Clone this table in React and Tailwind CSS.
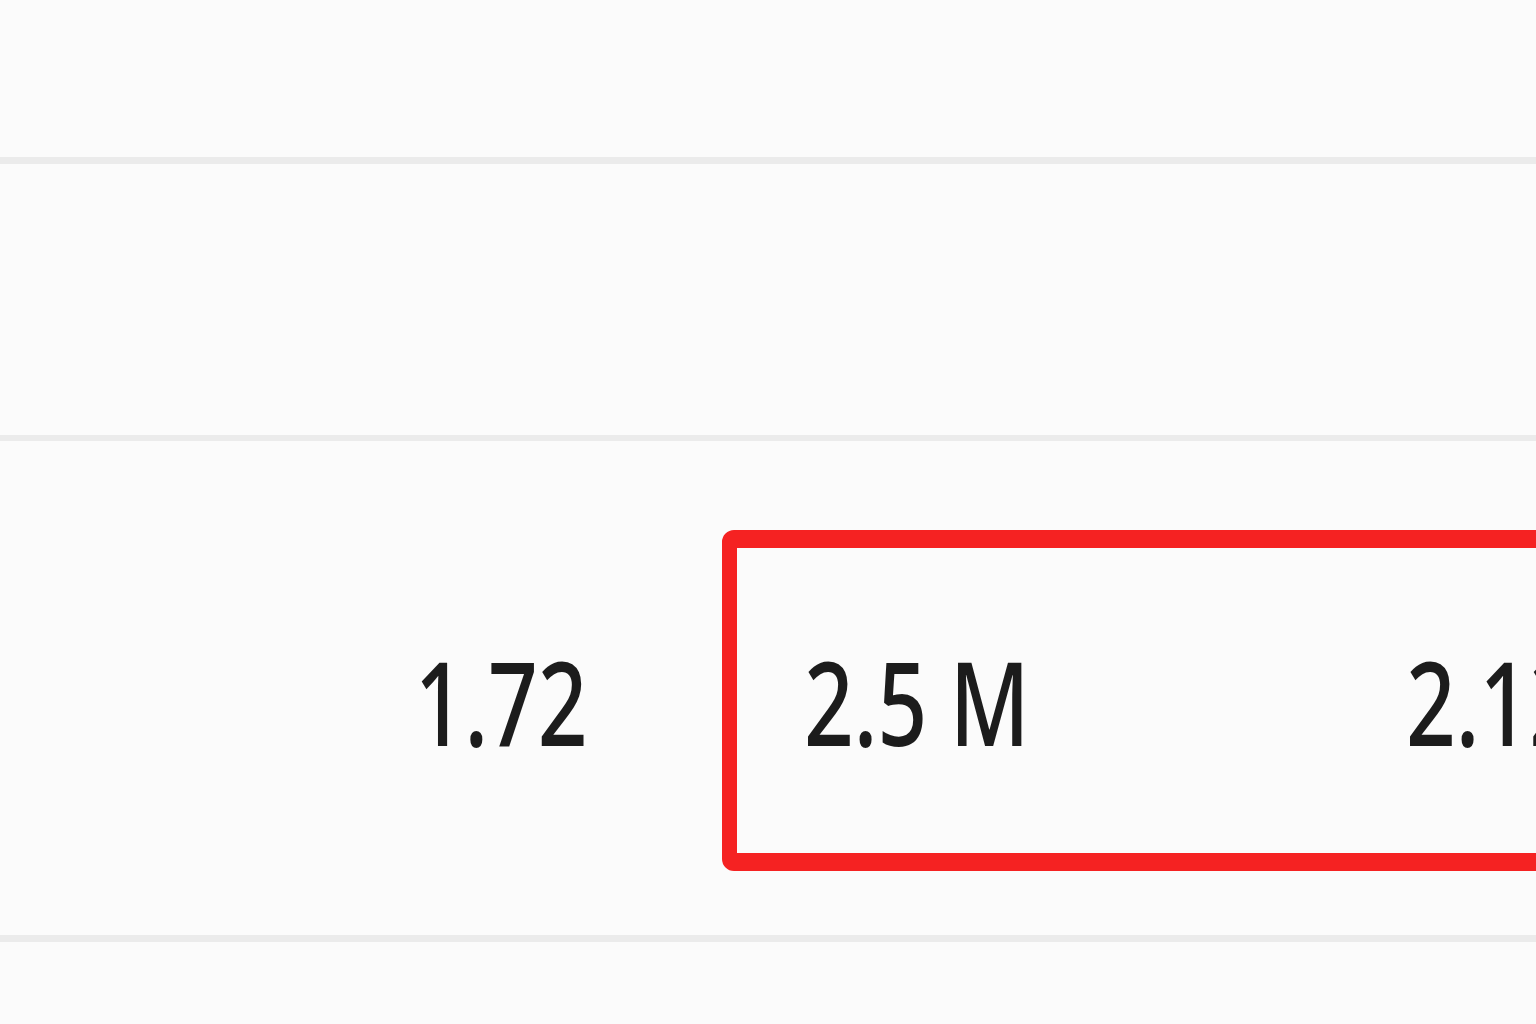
import React from 'react';

const numCls = "inline-block text-[116px] leading-none font-medium text-[#1c1c1c] scale-x-[0.75] whitespace-nowrap";

export default function App() {
  return (
    <div className="h-screen w-full overflow-hidden bg-[#fbfbfb] flex flex-col" style={{ fontFamily: '"Noto Sans", "Open Sans", sans-serif' }}>
      {/* header row */}
      <div className="h-[157px] shrink-0" />
      <div className="h-[7px] shrink-0 bg-[#ebebeb]" />

      {/* empty row */}
      <div className="h-[271px] shrink-0" />
      <div className="h-[6px] shrink-0 bg-[#ebebeb]" />

      {/* value row */}
      <div className="h-[494px] shrink-0 pt-[89px]">
        <div className="flex items-center">
          <div className="w-[588px] shrink-0 flex justify-end">
            <span className={numCls + " origin-right"}>1.72</span>
          </div>
          <div className="ml-[134px] w-[1000px] shrink-0 h-[341px] rounded-[12px] border-x-[15px] border-y-[18px] border-[#f52222] flex items-center">
            <div className="w-[669px] shrink-0 pl-[67px]">
              <span className={numCls + " origin-left"}>2.5 M</span>
            </div>
            <div>
              <span className={numCls + " origin-left"}>2.12</span>
            </div>
          </div>
        </div>
      </div>
      <div className="h-[7px] shrink-0 bg-[#ebebeb]" />

      <div className="flex-1" />
    </div>
  );
}
